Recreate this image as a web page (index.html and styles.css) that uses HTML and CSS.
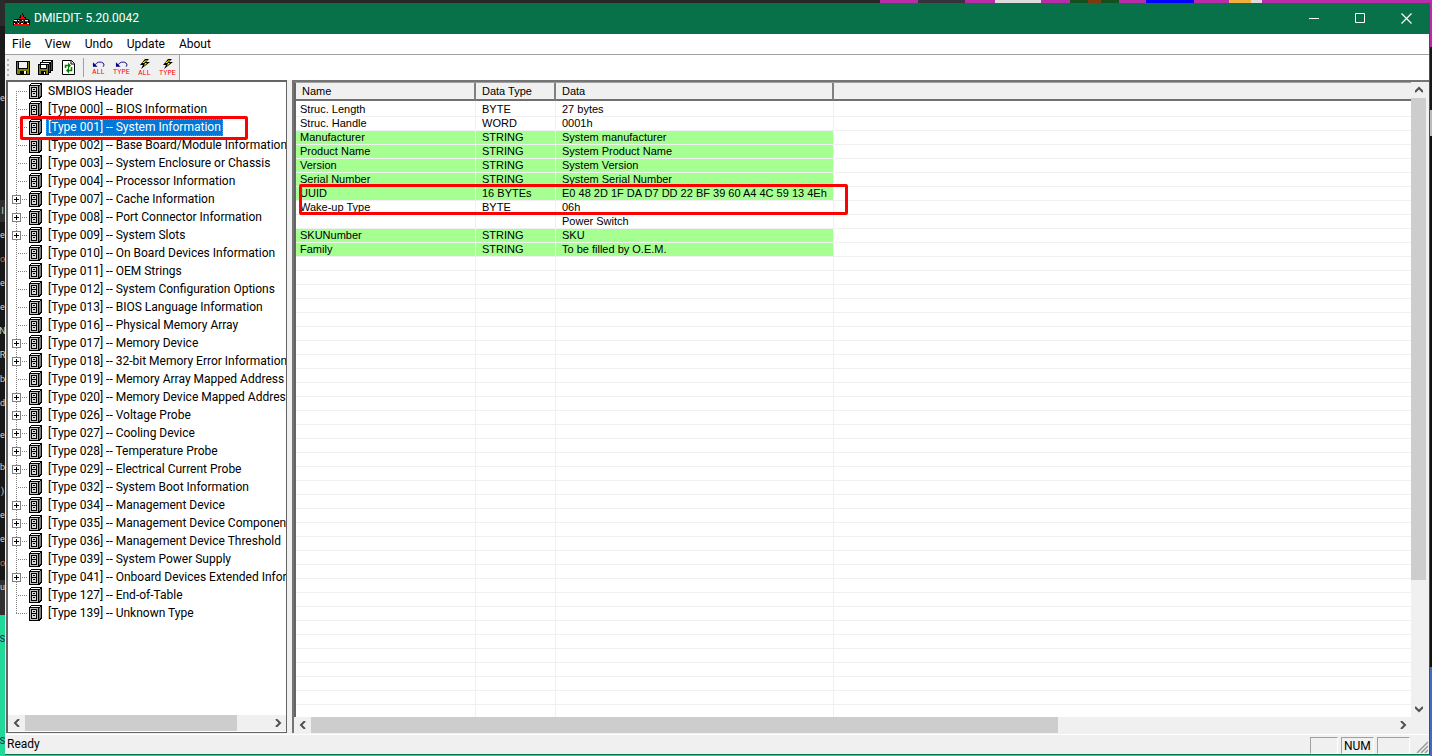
FILE: index.html
```html
<!DOCTYPE html>
<html lang="en">
<head>
<meta charset="utf-8">
<title>DMIEDIT- 5.20.0042</title>
<link rel="stylesheet" href="styles.css">
</head>
<body>
<svg class="sprite" aria-hidden="true">
  <symbol id="cabinet" viewBox="0 0 14 16">
    <path d="M0 2h1V1h1V0h11v14h-1v1h-1v1H0z" fill="#000"/>
    <path d="M2 1h9v1H2z" fill="#fff"/><path d="M1 3h8v12H1z" fill="#c0c0c0"/>
    <path d="M10 3h1V2h1v11h-1v1h-1z" fill="#808080"/>
    <path d="M2 4h6v10H2z"/><path d="M3 5h4v3H3zM3 9h4v4H3z" fill="#d8d8d8"/>
    <path d="M4 6h2v1H4zM4 10h2v1H4z"/>
  </symbol>
  <symbol id="undo" viewBox="0 0 14 8">
    <path d="M3 5l2-2 2-1h3l2 1 1 2-1 2" fill="none" stroke="#000090"/><path d="M1 2v5h5z" fill="#000090"/>
  </symbol>
  <symbol id="bolt" viewBox="0 0 12 10">
    <path d="M6 0h4L7 3h4L2 10l2-4H1z"/><path d="M7 1h1L5 4h3L5 7l1-3H3z" fill="#ff0"/>
  </symbol>
  <symbol id="arrow" viewBox="0 0 8 8"><path d="M6 0L2 4l4 4" fill="none" stroke="#505050" stroke-width="2"/></symbol>
</svg>
<div class="desktop">
  <div class="edge-left" aria-hidden="true">
    <span class="first">e</span><span class="gap">l</span><span>e</span><span class="warm">o</span><span>e</span><span>e</span><span>N</span><span>R</span><span>b</span><span>d</span><span class="skip">e</span><span class="skip">b</span><span>)</span><span>e</span><span>e</span><span class="warm">o</span><span>u</span>
    <span class="low">S</span><span class="last">S</span>
  </div>
  <div class="stage">
    <div class="edge-top"></div>
    <main class="window">
      <header class="titlebar">
        <svg class="logo" width="17" height="12" viewBox="0 0 17 12" aria-hidden="true">
          <path d="M8 0h2v2h1v2h2v2h3v1h1v5H0V8h1V6h5V4h1V2h1z" fill="#000"/>
          <path d="M8 0h1v2h1v2h1v1h1v1H6V5h2z" fill="#f00"/>
          <path d="M1 7h3v1H1zM5 7h1v1H5zM9 7h1v1H9zM12 7h3v1h-3zM1 10h1v1H1zM5 10h1v1H5zM8 10h2v1H8zM14 10h2v1h-2z" fill="#fff"/>
          <path d="M2 8h2v1H2zM4 9h1v2H4zM6 7h1v3H6zM7 8h2v1H7zM10 7h1v3h-1zM12 8h2v1h-2zM14 8h1v2h-1zM1 11h15v1H1z" fill="#f00"/>
        </svg>
        <h1>DMIEDIT- 5.20.0042</h1>
        <button aria-label="Minimize"><svg width="11" height="11"><path d="M0 5.500h10" stroke="#fff"/></svg></button>
        <button aria-label="Maximize"><svg width="11" height="11"><path d="M.5.500h9v9h-9z" fill="none" stroke="#fff"/></svg></button>
        <button aria-label="Close"><svg width="11" height="11"><path d="M.5.500l10 10M10.500.500l-10 10" stroke="#fff" stroke-width="1.200"/></svg></button>
      </header>
      <nav class="menu"><button>File</button><button>View</button><button>Undo</button><button>Update</button><button>About</button></nav>
      <div class="toolbar-row">
        <div class="toolbar" role="toolbar">
          <span class="grip"></span>
          <button aria-label="Save"><svg width="14" height="14" viewBox="0 0 14 14"><path d="M0 0h14v14H1L0 13z"/><path d="M1 1h1v7h10V1h1v12h-2v-3H4v3H1z" fill="#808000"/><path d="M3 1h8v6H3z" fill="#f0f0f0"/><path d="M8 10h2v3H8z" fill="#f0f0f0"/></svg></button>
          <button aria-label="Save all"><svg width="15" height="15" viewBox="0 0 15 15"><path d="M4 0h11v11h-2v2h-2v2H0V4h2V2h2z"/><path d="M5 1h8v1H5zM3 3h8v1H3z" fill="#fff"/><path d="M13 2h1v8h-1zM11 4h1v8h-1z" fill="#008000"/><path d="M1 5h1v4h7V5h1v9H8v-3H3v3H1z" fill="#808000"/><path d="M3 5h5v3H3zM6 12h1v2H6z" fill="#fff"/></svg></button>
          <button aria-label="Refresh"><svg width="14" height="15" viewBox="0 0 14 15"><path d="M.5.500h9l3 3v11H.5z" fill="#fff" stroke="#000"/><path d="M9 1v3h3" fill="none" stroke="#000"/><path d="M3.500 8V5.500H7M9.500 7v3.500H6" fill="none" stroke="#008000" stroke-width="1.500"/><path d="M6 2.500v6l3-3zM7 7.500v6l-3-3z" fill="#008000"/></svg></button>
          <span class="divider"></span>
          <button class="tagged" aria-label="Undo all"><svg width="13" height="8"><use href="#undo"/></svg><span>ALL</span></button>
          <button class="tagged" aria-label="Undo type"><svg width="13" height="8"><use href="#undo"/></svg><span>TYPE</span></button>
          <button class="tagged" aria-label="Update all"><svg width="12" height="10"><use href="#bolt"/></svg><span>ALL</span></button>
          <button class="tagged" aria-label="Update type"><svg width="12" height="10"><use href="#bolt"/></svg><span>TYPE</span></button>
        </div>
      </div>
      <div class="panes">
        <section class="tree-pane">
          <ul class="tree">
            <li><i></i><svg><use href="#cabinet"/></svg><span>SMBIOS Header</span></li>
            <li><i></i><svg><use href="#cabinet"/></svg><span>[Type 000] -- BIOS Information</span></li>
            <li class="selected"><i></i><svg><use href="#cabinet"/></svg><span>[Type 001] -- System Information</span></li>
            <li><i></i><svg><use href="#cabinet"/></svg><span>[Type 002] -- Base Board/Module Information</span></li>
            <li><i></i><svg><use href="#cabinet"/></svg><span>[Type 003] -- System Enclosure or Chassis</span></li>
            <li><i></i><svg><use href="#cabinet"/></svg><span>[Type 004] -- Processor Information</span></li>
            <li><i><button aria-label="Expand"></button></i><svg><use href="#cabinet"/></svg><span>[Type 007] -- Cache Information</span></li>
            <li><i><button aria-label="Expand"></button></i><svg><use href="#cabinet"/></svg><span>[Type 008] -- Port Connector Information</span></li>
            <li><i><button aria-label="Expand"></button></i><svg><use href="#cabinet"/></svg><span>[Type 009] -- System Slots</span></li>
            <li><i></i><svg><use href="#cabinet"/></svg><span>[Type 010] -- On Board Devices Information</span></li>
            <li><i></i><svg><use href="#cabinet"/></svg><span>[Type 011] -- OEM Strings</span></li>
            <li><i></i><svg><use href="#cabinet"/></svg><span>[Type 012] -- System Configuration Options</span></li>
            <li><i></i><svg><use href="#cabinet"/></svg><span>[Type 013] -- BIOS Language Information</span></li>
            <li><i></i><svg><use href="#cabinet"/></svg><span>[Type 016] -- Physical Memory Array</span></li>
            <li><i><button aria-label="Expand"></button></i><svg><use href="#cabinet"/></svg><span>[Type 017] -- Memory Device</span></li>
            <li><i><button aria-label="Expand"></button></i><svg><use href="#cabinet"/></svg><span>[Type 018] -- 32-bit Memory Error Information</span></li>
            <li><i></i><svg><use href="#cabinet"/></svg><span>[Type 019] -- Memory Array Mapped Address</span></li>
            <li><i><button aria-label="Expand"></button></i><svg><use href="#cabinet"/></svg><span>[Type 020] -- Memory Device Mapped Address</span></li>
            <li><i><button aria-label="Expand"></button></i><svg><use href="#cabinet"/></svg><span>[Type 026] -- Voltage Probe</span></li>
            <li><i><button aria-label="Expand"></button></i><svg><use href="#cabinet"/></svg><span>[Type 027] -- Cooling Device</span></li>
            <li><i><button aria-label="Expand"></button></i><svg><use href="#cabinet"/></svg><span>[Type 028] -- Temperature Probe</span></li>
            <li><i><button aria-label="Expand"></button></i><svg><use href="#cabinet"/></svg><span>[Type 029] -- Electrical Current Probe</span></li>
            <li><i></i><svg><use href="#cabinet"/></svg><span>[Type 032] -- System Boot Information</span></li>
            <li><i><button aria-label="Expand"></button></i><svg><use href="#cabinet"/></svg><span>[Type 034] -- Management Device</span></li>
            <li><i><button aria-label="Expand"></button></i><svg><use href="#cabinet"/></svg><span>[Type 035] -- Management Device Component</span></li>
            <li><i><button aria-label="Expand"></button></i><svg><use href="#cabinet"/></svg><span>[Type 036] -- Management Device Threshold</span></li>
            <li><i></i><svg><use href="#cabinet"/></svg><span>[Type 039] -- System Power Supply</span></li>
            <li><i><button aria-label="Expand"></button></i><svg><use href="#cabinet"/></svg><span>[Type 041] -- Onboard Devices Extended Information</span></li>
            <li><i></i><svg><use href="#cabinet"/></svg><span>[Type 127] -- End-of-Table</span></li>
            <li><i></i><svg><use href="#cabinet"/></svg><span>[Type 139] -- Unknown Type</span></li>
          </ul>
          <div class="scroll-x"><button aria-label="Scroll left"><svg><use href="#arrow"/></svg></button><div class="track"><div class="thumb tree-thumb"></div></div><button class="right" aria-label="Scroll right"><svg><use href="#arrow"/></svg></button></div>
        </section>
        <section class="list-pane">
          <div class="list-main">
            <div class="list">
              <table>
                <colgroup><col class="c-name"><col class="c-type"><col class="c-data"><col></colgroup>
                <thead><tr><th>Name</th><th>Data Type</th><th>Data</th><th></th></tr></thead>
                <tbody>
                  <tr><td>Struc. Length</td><td>BYTE</td><td>27 bytes</td><td></td></tr>
                  <tr><td>Struc. Handle</td><td>WORD</td><td>0001h</td><td></td></tr>
                  <tr class="edit"><td>Manufacturer</td><td>STRING</td><td>System manufacturer</td><td></td></tr>
                  <tr class="edit"><td>Product Name</td><td>STRING</td><td>System Product Name</td><td></td></tr>
                  <tr class="edit"><td>Version</td><td>STRING</td><td>System Version</td><td></td></tr>
                  <tr class="edit"><td>Serial Number</td><td>STRING</td><td>System Serial Number</td><td></td></tr>
                  <tr class="edit marked"><td>UUID</td><td>16 BYTEs</td><td>E0 48 2D 1F DA D7 DD 22 BF 39 60 A4 4C 59 13 4Eh</td><td></td></tr>
                  <tr><td>Wake-up Type</td><td>BYTE</td><td>06h</td><td></td></tr>
                  <tr><td></td><td></td><td>Power Switch</td><td></td></tr>
                  <tr class="edit"><td>SKUNumber</td><td>STRING</td><td>SKU</td><td></td></tr>
                  <tr class="edit"><td>Family</td><td>STRING</td><td>To be filled by O.E.M.</td><td></td></tr>
                </tbody>
              </table>
            </div>
            <div class="scroll-y"><button class="up" aria-label="Scroll up"><svg><use href="#arrow"/></svg></button><div class="track"><div class="thumb"></div></div><button class="down" aria-label="Scroll down"><svg><use href="#arrow"/></svg></button></div>
          </div>
          <div class="scroll-x list-scroll"><button aria-label="Scroll left"><svg><use href="#arrow"/></svg></button><div class="track"><div class="thumb list-thumb"></div></div><button class="right" aria-label="Scroll right"><svg><use href="#arrow"/></svg></button></div>
        </section>
      </div>
      <footer class="status">
        <span class="ready">Ready</span><span class="cell"></span><span class="cell num">NUM</span><span class="cell wide"></span>
        <svg width="12" height="12" aria-hidden="true"><path d="M1 12L12 1M5 12l7-7M9 12l3-3" stroke="#999" stroke-width="1.500"/></svg>
      </footer>
    </main>
    <div class="edge-bottom"></div>
  </div>
  <div class="edge-right"></div>
</div>
</body>
</html>
```
FILE: styles.css
```css
*, *::before, *::after { box-sizing: border-box; }
body { margin: 0; font: 12px Roboto, "Open Sans", sans-serif; color: #000; }
button { border: 0; padding: 0; background: none; font: inherit; color: inherit; display: flex; align-items: center; justify-content: center; }
.sprite { display: none; }

.desktop { display: flex; height: 100vh; }
.edge-left { width: 5px; flex: none; overflow: hidden; display: flex; flex-direction: column; align-items: center; background: linear-gradient(#2b2b2b 26px, #1b1b1d 26px 200px, #303032 200px 222px, #181818 222px 580px, #303030 580px 615px, #20d898 615px); color: #d0d0d0; font-size: 9px; line-height: 24px; white-space: nowrap; }
.edge-left span { flex: none; }
.edge-left .warm { color: #c87040; }
.edge-left .first { margin-top: 86px; }
.edge-left .gap { margin-top: 89px; }
.edge-left .skip { margin-top: 8px; }
.edge-left .low { margin-top: 28px; color: #124; }
.edge-left .last { margin-top: 78px; color: #124; }
.edge-right { width: 2px; flex: none; background: linear-gradient(#b82ca8 47px, #181818 47px 110px, #bbb 110px 136px, #101010 136px 667px, #3f6bc0 667px); }
.edge-top { height: 3px; flex: none; background: linear-gradient(90deg, #272727 875px, #b82ca8 875px 913px, #35333b 913px 960px, #b82ca8 960px 990px, #ddd 990px 1036px, #b82ca8 1036px 1065px, #135020 1065px 1083px, #7d3a12 1083px 1096px, #135020 1096px 1114px, #b82ca8 1114px 1141px, #00f 1141px 1189px, #b82ca8 1189px 1224px, #f0b040 1224px 1246px, #ddd 1246px 1257px, #b82ca8 1257px); }
.edge-bottom { height: 1px; flex: none; background: #20d898; }
.stage { flex: 1; min-width: 0; display: flex; flex-direction: column; }
.window { flex: 1; min-height: 0; display: flex; flex-direction: column; background: #f0f0f0; border-right: 1px solid #08714a; border-bottom: 1px solid #08714a; }

.titlebar { flex: none; height: 31px; display: flex; align-items: stretch; background: #08714a; color: #fff; padding-left: 8px; }
.logo { align-self: center; margin-right: 4px; }
.titlebar h1 { margin: 0; flex: 1; font-size: 12px; font-weight: 400; line-height: 31px; }
.titlebar button { width: 46px; }

.menu { flex: none; display: flex; background: #fff; height: 20px; line-height: 20px; }
.menu button { padding: 0 7px; }

.toolbar-row { flex: none; display: flex; background: #fff; border-top: 1px solid #a0a0a0; }
.toolbar { display: flex; align-items: center; height: 25px; background: #f0f0f0; border-right: 1px solid #a0a0a0; }
.toolbar button { width: 23px; height: 24px; }
.grip { width: 2px; height: 18px; margin: 0 2px; background: repeating-linear-gradient(#b0b0b0 0 2px, #f0f0f0 2px 5px); }
.divider { width: 1px; height: 19px; margin: 0 3px; background: #a0a0a0; }
.toolbar .tagged { flex-direction: column; color: #f00; font: 7px/8px "Liberation Mono", monospace; }

.panes { flex: 1; min-height: 0; display: flex; gap: 5px; padding-left: 1px; }
.tree-pane { width: 281px; flex: none; display: flex; flex-direction: column; background: #fff; border: 1px solid #646464; border-width: 2px 1px 1px 2px; padding-bottom: 1px; margin-bottom: 1px; }
.tree { flex: 1; min-height: 0; overflow: hidden; margin: 0; padding: 0; list-style: none; }
.tree li { position: relative; display: flex; align-items: center; height: 18px; padding-left: 4px; white-space: nowrap; }
.tree i { position: relative; width: 17px; height: 18px; flex: none; background: repeating-linear-gradient(#808080 0 1px, #fff 1px 2px) 4px 0 / 1px 100% no-repeat, repeating-linear-gradient(90deg, #808080 0 1px, #fff 1px 2px) 4px 9px / 11px 1px no-repeat; }
.tree li:first-child i { background-position: 4px 9px; }
.tree li:last-child i { background-size: 1px 9px, 11px 1px; }
.tree li > svg { width: 14px; height: 16px; flex: none; margin-right: 3px; }
.tree li > span { padding: 0 2px; line-height: 17px; }
.tree i button { width: 9px; height: 9px; margin-top: 5px; border: 1px solid #808080; background: linear-gradient(#000, #000) center / 5px 1px no-repeat, linear-gradient(#000, #000) center / 1px 5px no-repeat, #fff; }
.tree .selected > span { background: #0078d7; color: #fff; outline: 1px dotted #d78700; outline-offset: -1px; }
.tree .selected { z-index: 1; }
.tree .selected::after { content: ""; position: absolute; left: 12px; top: -2px; width: 228px; height: 24px; border: 3px solid #f00; border-radius: 2px; }

.scroll-x { display: flex; height: 16px; flex: none; background: #f0f0f0; }
.list-scroll { padding-right: 18px; }
.scroll-x button { width: 17px; }
.scroll-x svg, .scroll-y svg { width: 8px; height: 8px; }
.right svg { transform: rotate(180deg); }
.up svg { transform: rotate(90deg); }
.down svg { transform: rotate(-90deg); }
.track { flex: 1; min-width: 0; min-height: 0; }
.thumb { background: #cdcdcd; height: 100%; }
.tree-thumb { width: 87%; }
.list-thumb { width: 69%; }

.list-pane { flex: 1; min-width: 0; display: flex; flex-direction: column; border-left: 2px solid #747474; border-top: 2px solid #747474; margin-bottom: 1px; }
.list-main { flex: 1; min-height: 0; display: flex; }
.list { flex: 1; min-width: 0; overflow: hidden; border-left: 2px solid #646464; border-top: 1px solid #a0a0a0; font: 11px "Liberation Sans", Arial, sans-serif; background: linear-gradient(#f0f0f0, #f0f0f0) 179px 0 / 1px 100% no-repeat, linear-gradient(#f0f0f0, #f0f0f0) 259px 0 / 1px 100% no-repeat, linear-gradient(#f0f0f0, #f0f0f0) 537px 0 / 1px 100% no-repeat, repeating-linear-gradient(#fff 0 13px, #f0f0f0 13px 14px) 0 20px, #fff; }
.list table { width: 100%; table-layout: fixed; border-collapse: separate; border-spacing: 0; }
.c-name { width: 180px; }
.c-type { width: 80px; }
.c-data { width: 278px; }
.list th { height: 18px; padding: 1px 6px 0; text-align: left; font-weight: 400; line-height: 15px; background: #f0f0f0; border-right: 2px solid #808080; border-bottom: 2px solid #707070; }
.list th:last-child { border-right: 0; }
.list tbody::before { content: ""; display: block; height: 2px; }
.list td { height: 14px; padding: 0 6px; line-height: 13px; white-space: nowrap; border-right: 1px solid #f0f0f0; border-bottom: 1px solid #f0f0f0; }
.list td:first-child { padding-left: 4px; }
.list td:last-child { border-right: 0; }
.edit td:not(:last-child) { background: #a5ff91; }
.marked td:first-child { position: relative; }
.marked td:first-child::after { content: ""; position: absolute; left: 3px; top: -3px; width: 549px; height: 31px; border: 3px solid #f00; border-radius: 2px; }
.scroll-y { width: 18px; flex: none; display: flex; flex-direction: column; padding-right: 3px; background: #f0f0f0; }
.scroll-y button { height: 16px; flex: none; }
.scroll-y .thumb { height: 80%; }

.status { flex: none; display: flex; align-items: stretch; gap: 3px; height: 20px; padding-left: 2px; border-top: 1px solid #fff; }
.ready { flex: 1; line-height: 19px; }
.cell { width: 28px; margin-top: 2px; border: 1px solid #a0a0a0; border-right-color: #fff; border-bottom-color: #fff; line-height: 16px; padding: 0 2px; }
.num, .wide { width: 33px; }
.status svg { align-self: flex-end; margin: 0 1px 1px 3px; }
```
